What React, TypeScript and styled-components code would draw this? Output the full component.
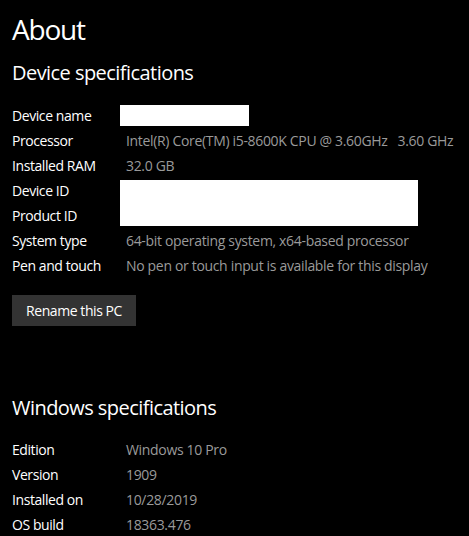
import React from "react";
import styled, { createGlobalStyle } from "styled-components";

const GlobalStyle = createGlobalStyle`
  html, body {
    margin: 0;
    padding: 0;
    background: #000000;
  }
  body {
    font-family: "Open Sans", "Noto Sans", sans-serif;
    color: #ffffff;
  }
`;

type Spec = { label: string; value?: string; redact?: "short" | "long" | "skip" };

const deviceSpecs: Spec[] = [
  { label: "Device name", redact: "short" },
  { label: "Processor", value: "Intel(R) Core(TM) i5-8600K CPU @ 3.60GHz\u00a0\u00a0\u00a03.60 GHz" },
  { label: "Installed RAM", value: "32.0 GB" },
  { label: "Device ID", redact: "long" },
  { label: "Product ID", redact: "skip" },
  { label: "System type", value: "64-bit operating system, x64-based processor" },
  { label: "Pen and touch", value: "No pen or touch input is available for this display" },
];

const windowsSpecs: Spec[] = [
  { label: "Edition", value: "Windows 10 Pro" },
  { label: "Version", value: "1909" },
  { label: "Installed on", value: "10/28/2019" },
  { label: "OS build", value: "18363.476" },
];

const App = () => {
  return (
    <Page>
      <GlobalStyle />
      <Title>About</Title>
      <SectionHeader>Device specifications</SectionHeader>
      <SpecGrid>
        {deviceSpecs.map((spec) => (
          <React.Fragment key={spec.label}>
            <Label>{spec.label}</Label>
            {spec.redact === "short" && <Redacted $width={129} $rows={1} />}
            {spec.redact === "long" && <Redacted $width={298} $rows={2} />}
            {!spec.redact && <Value>{spec.value}</Value>}
          </React.Fragment>
        ))}
      </SpecGrid>
      <RenameButton>Rename this PC</RenameButton>
      <SectionHeader $spaced>Windows specifications</SectionHeader>
      <SpecGrid>
        {windowsSpecs.map((spec) => (
          <React.Fragment key={spec.label}>
            <Label>{spec.label}</Label>
            <Value>{spec.value}</Value>
          </React.Fragment>
        ))}
      </SpecGrid>
    </Page>
  );
};

const Page = styled.div`
  width: 469px;
  height: 536px;
  overflow: hidden;
  padding: 11px 12px 0;
  box-sizing: border-box;
  background: #000000;
`;

const Title = styled.h1`
  margin: 0;
  font-size: 28px;
  font-weight: 400;
  line-height: 36px;
  letter-spacing: -1.2px;
`;

const SectionHeader = styled.h2<{ $spaced?: boolean }>`
  margin: ${(p) => (p.$spaced ? "68px 0 15px" : "12px 0 16px")};
  font-size: 20px;
  font-weight: 400;
  line-height: 28px;
  letter-spacing: -0.55px;
`;

const SpecGrid = styled.div`
  display: grid;
  grid-template-columns: 114px 1fr;
  grid-auto-rows: 25px;
  align-items: center;
`;

const Label = styled.span`
  font-size: 14px;
  line-height: 25px;
  letter-spacing: -0.42px;
  color: #ffffff;
  white-space: nowrap;
`;

const Value = styled.span`
  font-size: 14px;
  line-height: 25px;
  letter-spacing: -0.33px;
  color: #9a9a9a;
  white-space: nowrap;
`;

const Redacted = styled.div<{ $width: number; $rows: number }>`
  grid-row: span ${(p) => p.$rows};
  width: ${(p) => p.$width}px;
  height: ${(p) => p.$rows * 25 - 4}px;
  margin-left: -6px;
  background: #ffffff;
`;

const RenameButton = styled.button`
  margin-top: 17px;
  width: 124px;
  height: 31px;
  padding: 0;
  border: none;
  background: #333333;
  color: #ffffff;
  font-family: "Open Sans", "Noto Sans", sans-serif;
  font-size: 14px;
  letter-spacing: -0.43px;
  cursor: pointer;
`;

export default App;
